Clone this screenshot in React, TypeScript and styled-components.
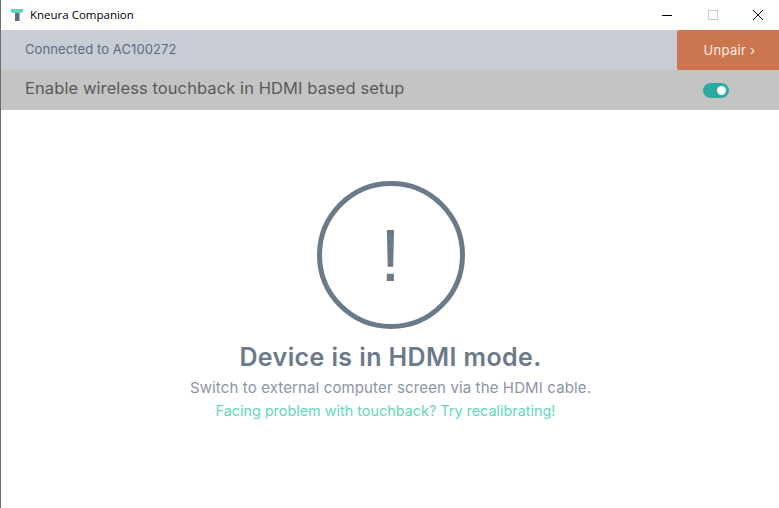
import React, { useState } from 'react'
import styled, { createGlobalStyle } from 'styled-components'

const GlobalStyle = createGlobalStyle`
    html, body {
        margin: 0;
        padding: 0;
        background-color: #ffffff;
    }
    #root {
        height: 508px;
    }
`;

const Wrapper = styled.div`
    width: 779px;
    height: 508px;
    box-sizing: border-box;
    border-left: 1px solid #6e6e6e;
    display: flex;
    flex-direction: column;
    overflow: hidden;
    font-family: Inter, "Liberation Sans", sans-serif;
`;

const TitleBar = styled.div`
    height: 30px;
    flex-shrink: 0;
    display: flex;
    align-items: center;
    padding: 0 16px 0 9px;
    background-color: #ffffff;
`;

const AppName = styled.span`
    margin: 0 0 1px 6px;
    font-family: "Open Sans", sans-serif;
    font-size: 11.5px;
    color: #000000;
    flex: 1;
`;

const WindowControls = styled.div`
    display: flex;
    align-items: center;
    gap: 35.5px;
`;

const WindowButton = styled.button`
    width: 10px;
    height: 10px;
    padding: 0;
    border: none;
    background: none;
    display: flex;
`;

const Row = styled.div<{ $bg: string }>`
    height: 40px;
    flex-shrink: 0;
    display: flex;
    align-items: center;
    justify-content: space-between;
    padding-left: 24px;
    background-color: ${props => props.$bg};
`;

const Connected = styled.span`
    margin-bottom: 2px;
    font-size: 13px;
    letter-spacing: 0.1px;
    color: #5c6b80;
`;

const UnpairButton = styled.button`
    width: 102px;
    height: 40px;
    border: none;
    border-radius: 2px 0 0 2px;
    background-color: #cc7650;
    color: #fbeee8;
    font-family: inherit;
    font-size: 13px;
    letter-spacing: 0.3px;
    padding: 0 0 0 3px;
`;

const ToggleLabel = styled.span`
    margin-bottom: 5px;
    font-size: 16.5px;
    letter-spacing: 0.09px;
    color: #5a5a5a;
`;

const Toggle = styled.button<{ $on: boolean }>`
    width: 26px;
    height: 15px;
    margin-right: 50px;
    padding: 0 3px;
    border: none;
    border-radius: 8px;
    background-color: #2baaa0;
    display: flex;
    align-items: center;
    justify-content: ${props => props.$on ? 'flex-end' : 'flex-start'};
`;

const Knob = styled.span`
    width: 9px;
    height: 9px;
    border-radius: 50%;
    background-color: #ffffff;
`;

const Content = styled.main`
    flex: 1;
    display: flex;
    flex-direction: column;
    align-items: center;
    padding: 71px 0 0 1px;
`;

const AlertCircle = styled.div`
    width: 148px;
    height: 148px;
    box-sizing: border-box;
    border: 5px solid #6b7a89;
    border-radius: 50%;
    display: flex;
    align-items: center;
    justify-content: center;
    color: #6b7a89;
    font-family: "Liberation Sans", sans-serif;
    font-size: 75px;
    font-weight: 400;
    line-height: 1;
`;

const Heading = styled.h1`
    margin: 13px 0 0;
    font-size: 25px;
    font-weight: 600;
    letter-spacing: 0.4px;
    line-height: 30px;
    color: #6b7a89;
`;

const Message = styled.p`
    margin: 5px 0 0;
    font-size: 15px;
    letter-spacing: 0.13px;
    line-height: 22px;
    color: #8b95a5;
`;

const Recalibrate = styled.a`
    margin: 1px 10px 0 0;
    font-size: 14.4px;
    line-height: 22px;
    color: #5fd8bf;
    cursor: pointer;
`;

const App: React.FC = () => {
    const [wireless, setWireless] = useState(true);

    return (
        <Wrapper>
            <GlobalStyle />
            <TitleBar>
                <svg width="14" height="14" viewBox="0 0 14 14">
                    <rect x="5" y="3" width="4.5" height="10" fill="#5c6f82" />
                    <path d="M1 1h12v2.5l-1.5 1.5h-9L1 3.5z" fill="#5fd8bf" />
                </svg>
                <AppName>Kneura Companion</AppName>
                <WindowControls>
                    <WindowButton aria-label="Minimize">
                        <svg width="10" height="10" viewBox="0 0 10 10">
                            <path d="M0 5.5h10" stroke="#000000" strokeWidth="1" />
                        </svg>
                    </WindowButton>
                    <WindowButton aria-label="Maximize">
                        <svg width="10" height="10" viewBox="0 0 10 10">
                            <rect x="0.5" y="0.5" width="9" height="9" fill="none" stroke="#cccccc" strokeWidth="1" />
                        </svg>
                    </WindowButton>
                    <WindowButton aria-label="Close">
                        <svg width="10" height="10" viewBox="0 0 10 10">
                            <path d="M0 0l10 10M10 0L0 10" stroke="#000000" strokeWidth="1" />
                        </svg>
                    </WindowButton>
                </WindowControls>
            </TitleBar>
            <Row $bg="#c8cdd5">
                <Connected>Connected to AC100272</Connected>
                <UnpairButton>Unpair ›</UnpairButton>
            </Row>
            <Row $bg="#c4c4c4">
                <ToggleLabel>Enable wireless touchback in HDMI based setup</ToggleLabel>
                <Toggle $on={wireless} onClick={() => setWireless(w => !w)}>
                    <Knob />
                </Toggle>
            </Row>
            <Content>
                <AlertCircle>!</AlertCircle>
                <Heading>Device is in HDMI mode.</Heading>
                <Message>Switch to external computer screen via the HDMI cable.</Message>
                <Recalibrate>Facing problem with touchback? Try recalibrating!</Recalibrate>
            </Content>
        </Wrapper>
    )
}

export default App
